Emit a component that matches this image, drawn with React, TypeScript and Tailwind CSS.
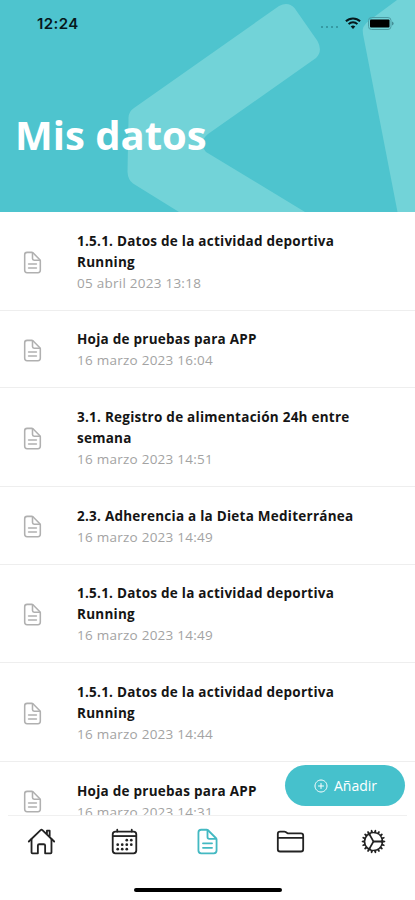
import {
  IoAddCircleOutline,
  IoCalendarOutline,
  IoCogOutline,
  IoDocumentTextOutline,
  IoFolderOutline,
  IoHomeOutline,
} from 'react-icons/io5';

const records = [
  { title: '1.5.1. Datos de la actividad deportiva Running', date: '05 abril 2023 13:18' },
  { title: 'Hoja de pruebas para APP', date: '16 marzo 2023 16:04' },
  { title: '3.1. Registro de alimentación 24h entre semana', date: '16 marzo 2023 14:51' },
  { title: '2.3. Adherencia a la Dieta Mediterránea', date: '16 marzo 2023 14:49' },
  { title: '1.5.1. Datos de la actividad deportiva Running', date: '16 marzo 2023 14:49' },
  { title: '1.5.1. Datos de la actividad deportiva Running', date: '16 marzo 2023 14:44' },
  { title: 'Hoja de pruebas para APP', date: '16 marzo 2023 14:31' },
];

const tabs = [
  { name: 'Inicio', Icon: IoHomeOutline },
  { name: 'Calendario', Icon: IoCalendarOutline },
  { name: 'Mis datos', Icon: IoDocumentTextOutline },
  { name: 'Carpeta', Icon: IoFolderOutline },
  { name: 'Ajustes', Icon: IoCogOutline },
];

function StatusBar() {
  return (
    <div className="relative flex h-[46px] items-center justify-between pl-[37px] pr-[21px] text-[#06181b]">
      <span className="font-['Inter',sans-serif] text-[15px] leading-none font-semibold tracking-[0.4px]">12:24</span>
      <div className="flex items-center">
        <div className="mt-[8px] mr-[7px] flex gap-[3px]">
          {[0, 1, 2, 3].map(i => (
            <span key={i} className="h-[2px] w-[2px] rounded-full bg-[#2f8d96]" />
          ))}
        </div>
        <svg className="mr-[7px] h-[12px] w-[16px]" viewBox="0 0 16 12" fill="none" stroke="currentColor" strokeWidth="2">
          <path d="M0.9 4.3a10.2 10.2 0 0 1 14.2 0" />
          <path d="M3.6 7.1a6.3 6.3 0 0 1 8.8 0" />
          <path d="M8 11.9 5.7 9.5a3.3 3.3 0 0 1 4.6 0z" fill="currentColor" stroke="none" />
        </svg>
        <svg className="h-[13px] w-[26px]" viewBox="0 0 26 13" fill="none">
          <rect x="0.5" y="0.5" width="22.5" height="12" rx="3" stroke="#4c9da4" />
          <rect x="2" y="2.5" width="19.5" height="8" rx="1" fill="#000" />
          <path d="M24.2 4.5v4a2.2 2.2 0 0 0 0-4z" fill="#3a8088" />
        </svg>
      </div>
    </div>
  );
}

export default function App() {
  return (
    <div className="flex h-[900px] w-[415px] flex-col overflow-hidden bg-white font-['Open_Sans','Noto_Sans',sans-serif]">
      {/* Cabecera */}
      <header className="relative h-[212px] shrink-0 overflow-hidden bg-[#4ec4ce]">
        <svg className="absolute inset-0 h-full w-full" viewBox="0 0 415 212" fill="#72d3d8">
          <path d="M279 6 Q288 1 294.5 8 L317.5 41 Q323 51 316 58 L208 134 Q198 142 206 152 L305 212 H179 L133 183.5 Q128 180 127.5 172 L128.5 119 Q128 112 134 108 Z" />
          <path d="M397 0 L370 20 Q361 26 363 34 L397.5 212 H415 V0 Z" />
        </svg>
        <StatusBar />
        <h1 className="relative mt-[62px] pl-[15px] text-[40px] leading-[54px] font-bold text-white">Mis datos</h1>
      </header>

      {/* Lista de registros */}
      <main className="min-h-0 flex-1 overflow-hidden">
        {records.map((r, i) => (
          <div key={i} className="flex items-center border-b border-[#eeeeee] pt-[18.5px] pb-[16.2px] pl-[20px]">
            <IoDocumentTextOutline className="h-[25px] w-[25px] shrink-0 text-[#b0b0b0]" />
            <div className="ml-[32px] w-[290px] text-[13.5px] leading-[21px] tracking-[0.25px]">
              <div className="font-bold text-[#151515]">{r.title}</div>
              <div className="text-[#a3a3a3]">{r.date}</div>
            </div>
          </div>
        ))}
      </main>

      {/* Barra inferior */}
      <nav className="relative h-[85px] shrink-0 bg-white">
        <div className="mx-[8px] border-t border-[#f0f0f0]" />
        <button className="absolute -top-[50px] right-[10px] flex h-[41px] w-[120px] items-center justify-center gap-[5px] rounded-full bg-[#46c1cc] text-[14px] text-white">
          <IoAddCircleOutline className="h-[16px] w-[16px]" />
          Añadir
        </button>
        <div className="grid grid-cols-5 pt-[11px]">
          {tabs.map(({ name, Icon }) => (
            <button key={name} aria-label={name} className="flex justify-center">
              <Icon className={`h-[29px] w-[29px] ${name === 'Mis datos' ? 'text-[#43b9c2]' : 'text-[#222222]'}`} />
            </button>
          ))}
        </div>
        <div className="mx-auto mt-[32px] h-[4px] w-[148px] rounded-full bg-black" />
      </nav>
    </div>
  );
}
